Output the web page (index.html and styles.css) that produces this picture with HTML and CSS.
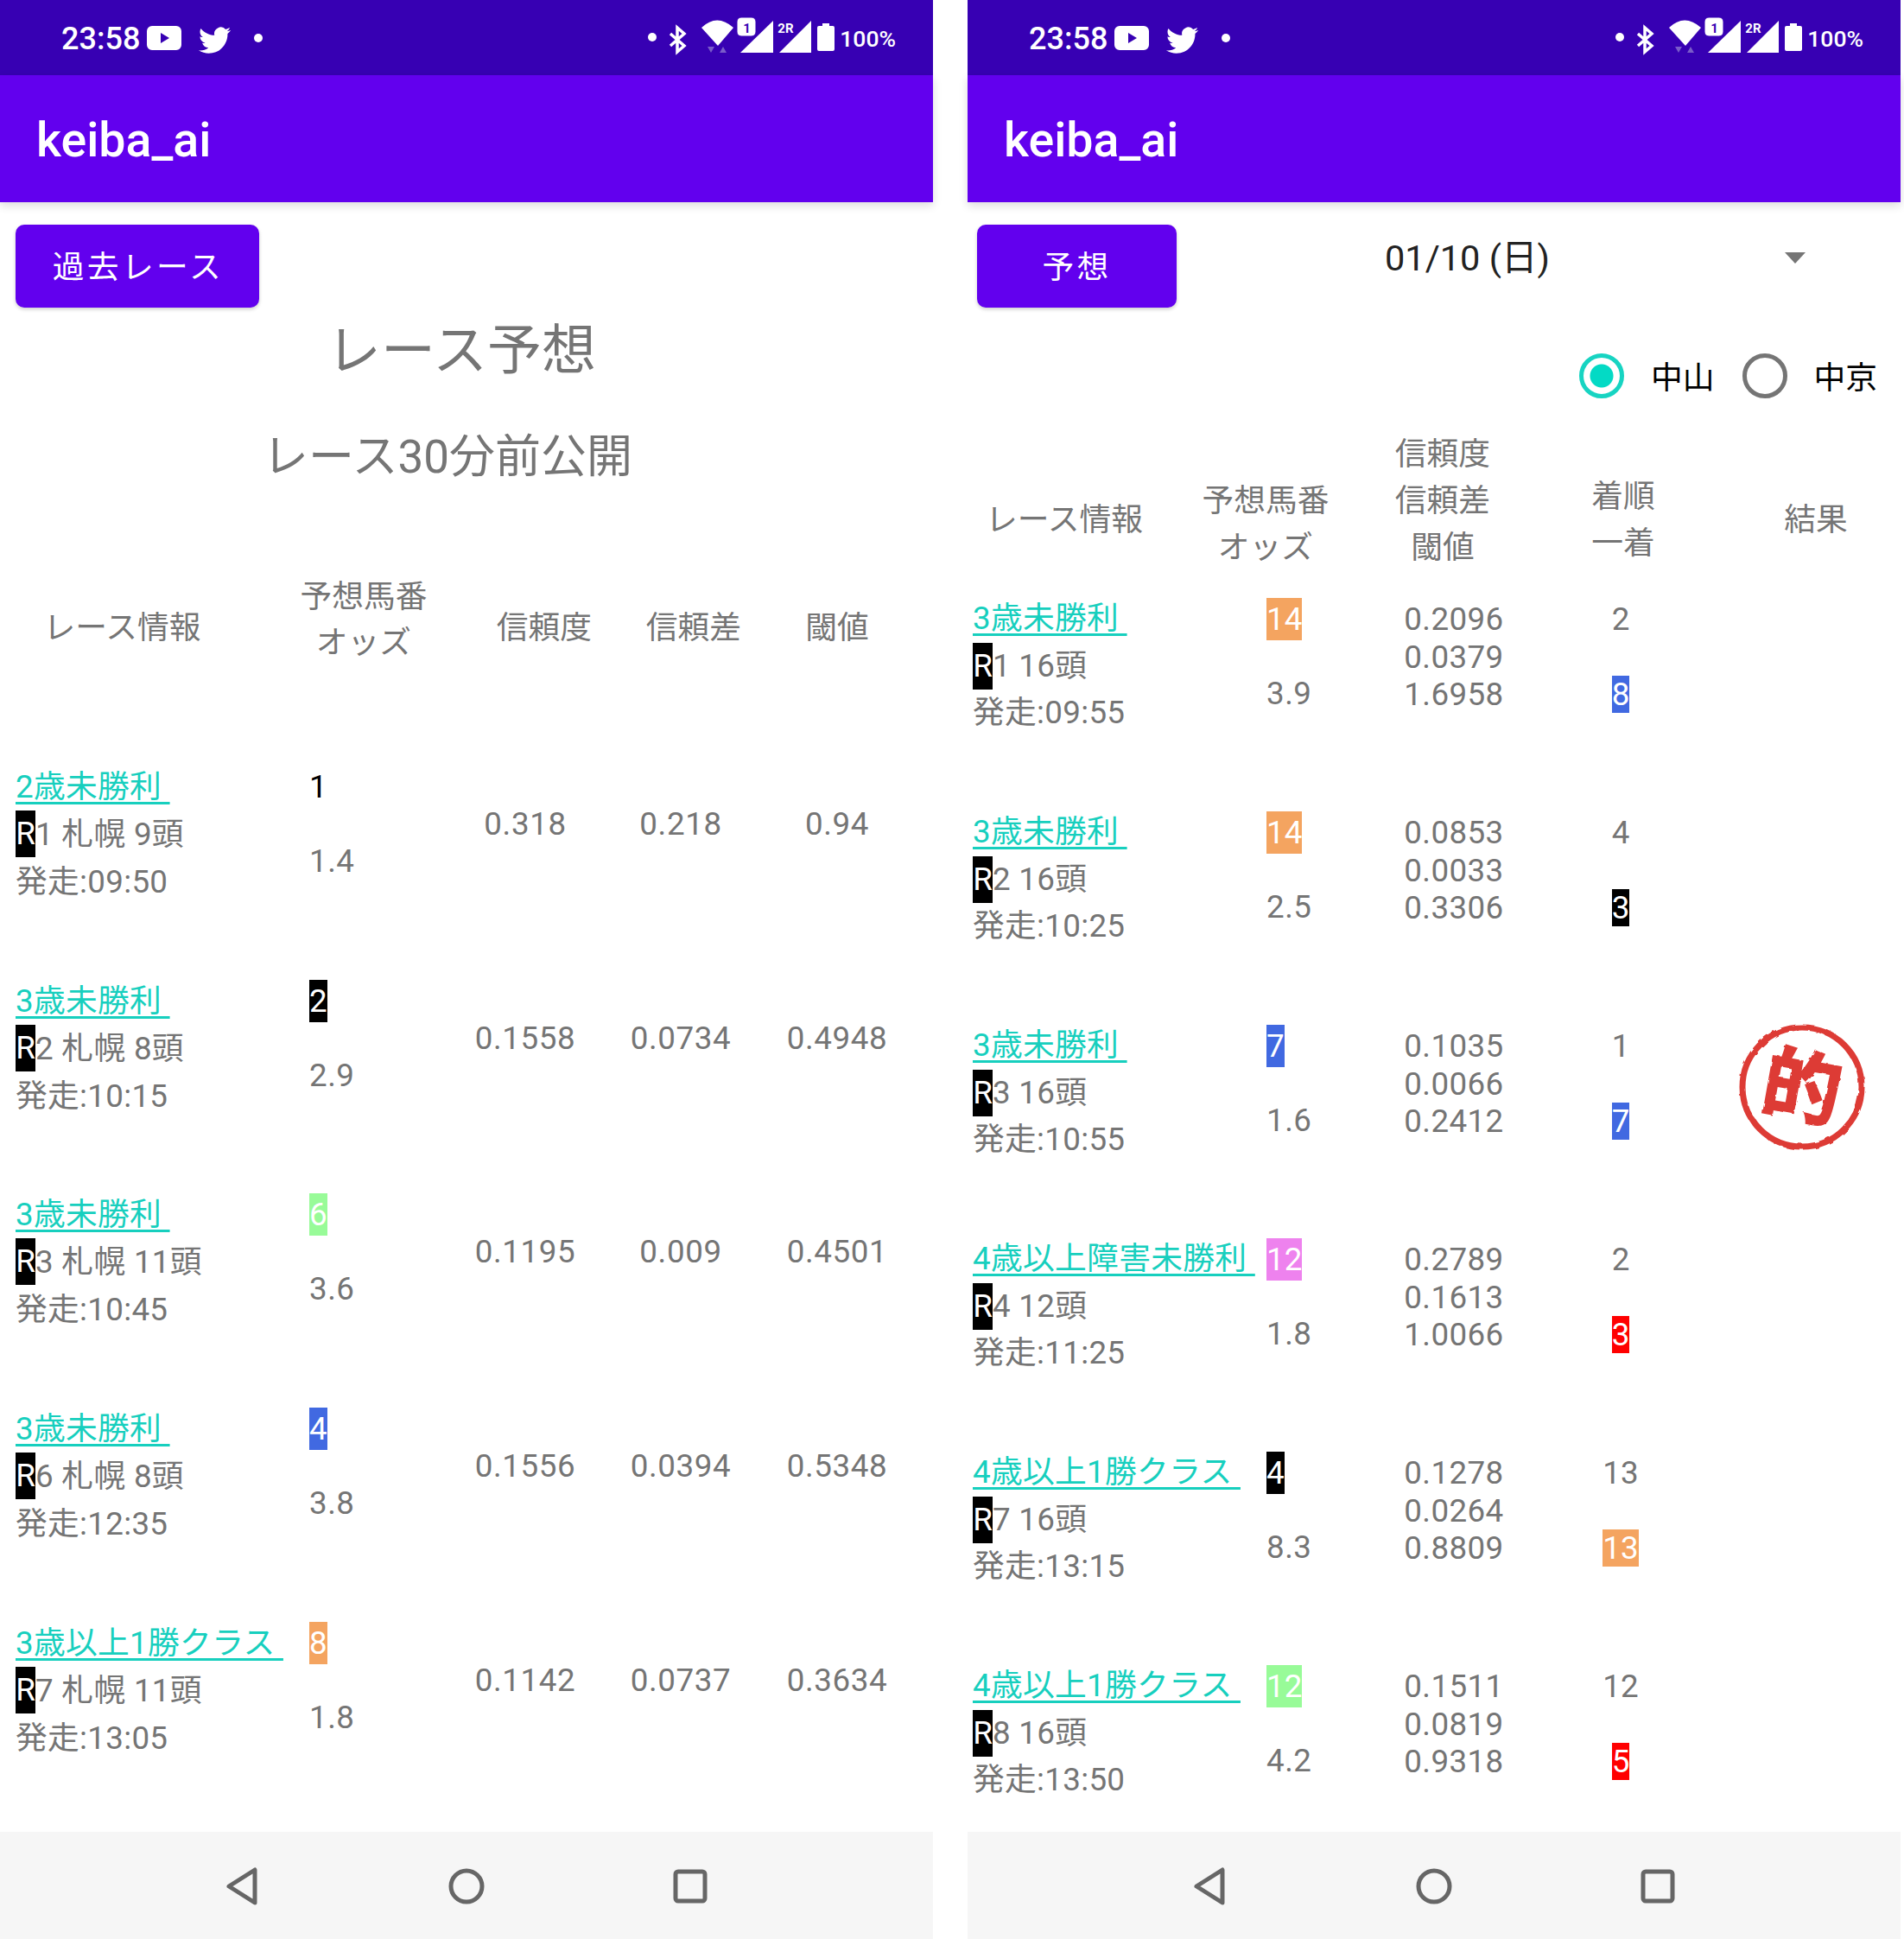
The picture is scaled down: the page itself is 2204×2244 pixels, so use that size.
FILE: index.html
```html
<!DOCTYPE html>
<html lang="ja">
<head>
<meta charset="utf-8">
<title>keiba_ai</title>
<link rel="stylesheet" href="styles.css">
</head>
<body>
<svg class="defs" width="0" height="0">
  <defs>
    <filter id="rough" x="-5%" y="-5%" width="110%" height="110%">
      <feTurbulence type="fractalNoise" baseFrequency="0.09" numOctaves="2" seed="4"/>
      <feDisplacementMap in="SourceGraphic" scale="3.5"/>
    </filter>
  </defs>
  <symbol id="status-left" viewBox="170 20 135 50">
    <path fill="#fff" fill-rule="evenodd" d="M176 30h28a6 6 0 0 1 6 6v16a6 6 0 0 1-6 6h-28a6 6 0 0 1-6-6V36a6 6 0 0 1 6-6zM186 38v12l10-6z"/>
    <g transform="translate(230 28) scale(1.55)"><path fill="#fff" d="M23.953 4.57a10 10 0 01-2.825.775 4.958 4.958 0 002.163-2.723c-.951.555-2.005.959-3.127 1.184a4.92 4.92 0 00-8.384 4.482C7.69 8.095 4.067 6.13 1.64 3.162a4.822 4.822 0 00-.666 2.475c0 1.71.87 3.213 2.188 4.096a4.904 4.904 0 01-2.228-.616v.06a4.923 4.923 0 003.946 4.827 4.996 4.996 0 01-2.212.085 4.936 4.936 0 004.604 3.417 9.867 9.867 0 01-6.102 2.105c-.39 0-.779-.023-1.17-.067a13.995 13.995 0 007.557 2.209c9.053 0 13.998-7.496 13.998-13.985 0-.21 0-.42-.015-.63A9.935 9.935 0 0024 4.59z"/></g>
    <circle cx="299" cy="44" r="5" fill="#fff"/>
  </symbol>
  <symbol id="status-glyphs" viewBox="750 15 222 50">
    <circle cx="757" cy="43" r="5" fill="#fff"/>
    <path fill="none" stroke="#fff" stroke-width="3.5" d="M778 39l16 14-8 7V32l8 7-16 14"/>
    <path fill="#fff" d="M814 32q18-17 37 0l-18 21z"/>
    <path fill="#7a5cc9" d="M821 54h8l-4 7zM839 54l4 7h-8z"/>
    <path fill="#fff" d="M859 61l38-37v37z"/>
    <rect x="855" y="20" width="22" height="22" rx="5" fill="#fff" stroke="#3700b3" stroke-width="1"/>
    <path fill="#fff" d="M904 61l37-37v37z"/>
    <path fill="#fff" d="M954 27h8v3h4a2 2 0 0 1 2 2v25a2 2 0 0 1-2 2h-16a2 2 0 0 1-2-2V32a2 2 0 0 1 2-2h4z"/>
  </symbol>
  <symbol id="nav-back" viewBox="0 0 40 46"><path fill="none" stroke="#666" stroke-width="5" stroke-linejoin="round" d="M35 4v38L5 23z"/></symbol>
  <symbol id="nav-home" viewBox="0 0 46 46"><circle cx="23" cy="23" r="18" fill="none" stroke="#666" stroke-width="5"/></symbol>
  <symbol id="nav-recent" viewBox="0 0 44 44"><rect x="5" y="5" width="34" height="34" rx="3" fill="none" stroke="#666" stroke-width="5"/></symbol>
</svg>

<div class="screens">

<section class="phone">
  <div class="status">
    <span class="time">23:58</span>
    <svg class="icons-left"><use href="#status-left"/></svg>
    <div class="icons-right">
      <svg class="icons-art"><use href="#status-glyphs"/></svg>
      <span class="sim sim-1">1</span>
      <span class="sim sim-2">2R</span>
    </div>
    <span class="battery">100%</span>
  </div>
  <header class="appbar">keiba_ai</header>
  <main class="content">
    <div class="toolbar toolbar-left"><button class="btn btn-past">過去レース</button></div>
    <h1 class="title">レース予想</h1>
    <h2 class="subtitle">レース30分前公開</h2>

    <div class="thead-l">
      <div class="low info">レース情報</div>
      <div>予想馬番<br>オッズ</div>
      <div class="low">信頼度</div>
      <div class="low">信頼差</div>
      <div class="low">閾値</div>
    </div>

    <div class="row-l">
      <div class="race"><a href="#">2歳未勝利&nbsp;</a><br><span class="r">R</span>1 札幌 9頭<br>発走:09:50</div>
      <div class="pick"><span class="num black-text">1</span><span class="odds">1.4</span></div>
      <div class="val">0.318</div><div class="val">0.218</div><div class="val">0.94</div>
    </div>
    <div class="row-l">
      <div class="race"><a href="#">3歳未勝利&nbsp;</a><br><span class="r">R</span>2 札幌 8頭<br>発走:10:15</div>
      <div class="pick"><span class="num b-black">2</span><span class="odds">2.9</span></div>
      <div class="val">0.1558</div><div class="val">0.0734</div><div class="val">0.4948</div>
    </div>
    <div class="row-l">
      <div class="race"><a href="#">3歳未勝利&nbsp;</a><br><span class="r">R</span>3 札幌 11頭<br>発走:10:45</div>
      <div class="pick"><span class="num b-green">6</span><span class="odds">3.6</span></div>
      <div class="val">0.1195</div><div class="val">0.009</div><div class="val">0.4501</div>
    </div>
    <div class="row-l">
      <div class="race"><a href="#">3歳未勝利&nbsp;</a><br><span class="r">R</span>6 札幌 8頭<br>発走:12:35</div>
      <div class="pick"><span class="num b-blue">4</span><span class="odds">3.8</span></div>
      <div class="val">0.1556</div><div class="val">0.0394</div><div class="val">0.5348</div>
    </div>
    <div class="row-l">
      <div class="race"><a href="#">3歳以上1勝クラス&nbsp;</a><br><span class="r">R</span>7 札幌 11頭<br>発走:13:05</div>
      <div class="pick"><span class="num b-orange">8</span><span class="odds">1.8</span></div>
      <div class="val">0.1142</div><div class="val">0.0737</div><div class="val">0.3634</div>
    </div>
  </main>
  <nav class="navbar">
    <svg class="nav-b"><use href="#nav-back"/></svg>
    <svg class="nav-h"><use href="#nav-home"/></svg>
    <svg class="nav-r"><use href="#nav-recent"/></svg>
  </nav>
</section>

<section class="phone">
  <div class="status">
    <span class="time">23:58</span>
    <svg class="icons-left"><use href="#status-left"/></svg>
    <div class="icons-right">
      <svg class="icons-art"><use href="#status-glyphs"/></svg>
      <span class="sim sim-1">1</span>
      <span class="sim sim-2">2R</span>
    </div>
    <span class="battery">100%</span>
  </div>
  <header class="appbar">keiba_ai</header>
  <main class="content">
    <div class="toolbar toolbar-right">
      <button class="btn btn-pred">予想</button>
      <div class="spinner"><span>01/10 (日)</span><i class="caret"></i></div>
    </div>
    <div class="radios">
      <i class="radio on"></i><span class="radio-label">中山</span>
      <i class="radio"></i><span class="radio-label">中京</span>
    </div>

    <div class="thead-r">
      <div class="low info">レース情報</div>
      <div class="low pick-head">予想馬番<br>オッズ</div>
      <div>信頼度<br>信頼差<br>閾値</div>
      <div class="low">着順<br>一着</div>
      <div class="low last">結果</div>
    </div>

    <div class="row-r">
      <div class="race"><a href="#">3歳未勝利&nbsp;</a><br><span class="r">R</span>1 16頭<br>発走:09:55</div>
      <div class="pick"><span class="num b-orange">14</span><span class="odds">3.9</span></div>
      <div class="stats">0.2096<br>0.0379<br>1.6958</div>
      <div class="rank"><span>2</span><span class="small b-blue">8</span></div>
      <div class="result"></div>
    </div>
    <div class="row-r">
      <div class="race"><a href="#">3歳未勝利&nbsp;</a><br><span class="r">R</span>2 16頭<br>発走:10:25</div>
      <div class="pick"><span class="num b-orange">14</span><span class="odds">2.5</span></div>
      <div class="stats">0.0853<br>0.0033<br>0.3306</div>
      <div class="rank"><span>4</span><span class="small b-black">3</span></div>
      <div class="result"></div>
    </div>
    <div class="row-r">
      <div class="race"><a href="#">3歳未勝利&nbsp;</a><br><span class="r">R</span>3 16頭<br>発走:10:55</div>
      <div class="pick"><span class="num b-blue">7</span><span class="odds">1.6</span></div>
      <div class="stats">0.1035<br>0.0066<br>0.2412</div>
      <div class="rank"><span>1</span><span class="small b-blue">7</span></div>
      <div class="result">
        <svg class="stamp" viewBox="0 0 150 150">
          <g filter="url(#rough)">
            <circle cx="75" cy="75" r="69" fill="none" stroke="#dd3a36" stroke-width="7"/>
            <text x="75" y="108" class="stamp-text" transform="rotate(10 75 75)">的</text>
          </g>
        </svg>
      </div>
    </div>
    <div class="row-r">
      <div class="race"><a href="#">4歳以上障害未勝利&nbsp;</a><br><span class="r">R</span>4 12頭<br>発走:11:25</div>
      <div class="pick"><span class="num b-violet">12</span><span class="odds">1.8</span></div>
      <div class="stats">0.2789<br>0.1613<br>1.0066</div>
      <div class="rank"><span>2</span><span class="small b-red">3</span></div>
      <div class="result"></div>
    </div>
    <div class="row-r">
      <div class="race"><a href="#">4歳以上1勝クラス&nbsp;</a><br><span class="r">R</span>7 16頭<br>発走:13:15</div>
      <div class="pick"><span class="num b-black">4</span><span class="odds">8.3</span></div>
      <div class="stats">0.1278<br>0.0264<br>0.8809</div>
      <div class="rank"><span>13</span><span class="small b-orange">13</span></div>
      <div class="result"></div>
    </div>
    <div class="row-r">
      <div class="race"><a href="#">4歳以上1勝クラス&nbsp;</a><br><span class="r">R</span>8 16頭<br>発走:13:50</div>
      <div class="pick"><span class="num b-green">12</span><span class="odds">4.2</span></div>
      <div class="stats">0.1511<br>0.0819<br>0.9318</div>
      <div class="rank"><span>12</span><span class="small b-red">5</span></div>
      <div class="result"></div>
    </div>
  </main>
  <nav class="navbar">
    <svg class="nav-b"><use href="#nav-back"/></svg>
    <svg class="nav-h"><use href="#nav-home"/></svg>
    <svg class="nav-r"><use href="#nav-recent"/></svg>
  </nav>
</section>

</div>
</body>
</html>
```

FILE: styles.css
```css
* { box-sizing: border-box; }
html, body { margin: 0; padding: 0; background: #fff; }
body {
  width: 2204px;
  height: 2244px;
  overflow: hidden;
  font-family: Roboto, "Noto Sans CJK JP", sans-serif;
  font-size: 36.75px;
  color: #757575;
}
.defs { position: absolute; }
.screens { display: flex; gap: 40px; }
.phone { width: 1080px; height: 2244px; display: flex; flex-direction: column; }

/* status bar */
.status {
  height: 87px;
  background: #3700b3;
  color: #fff;
  display: flex;
  align-items: center;
  padding: 2px 43px 0 71px;
}
.time { font-size: 36px; font-weight: 500; width: 99px; }
.icons-left { width: 135px; height: 50px; align-self: flex-start; margin-top: 18px; }
.icons-right { width: 222px; height: 50px; margin-left: auto; align-self: flex-start; margin-top: 13px; position: relative; }
.icons-art { width: 222px; height: 50px; display: block; }
.sim { position: absolute; font-size: 15px; font-weight: 700; line-height: 18px; }
.sim-1 { left: 112px; top: 9px; color: #3700b3; }
.sim-2 { left: 152px; top: 9px; }
.battery { font-size: 26.5px; font-weight: 500; margin-left: 2px; }

/* app bar */
.appbar {
  height: 147px;
  background: #6200ee;
  color: #fff;
  font-size: 55.5px;
  font-weight: 500;
  line-height: 147px;
  padding: 2px 0 0 42px;
  box-shadow: 0 4px 10px rgba(0, 0, 0, .14);
  position: relative;
}

.content { flex: 1; min-height: 0; overflow: hidden; }

/* buttons */
.toolbar { display: flex; margin-top: 26px; align-items: flex-start; }
.btn {
  height: 96px;
  border: 0;
  border-radius: 10px;
  background: #6200ee;
  color: #fff;
  font: inherit;
  letter-spacing: 3.28px;
  box-shadow: 0 2px 4px rgba(0, 0, 0, .2);
  padding: 0 0 5px;
}
.btn-past { width: 282px; margin-left: 18px; padding-left: 2px; }
.btn-pred { width: 231px; margin-left: 11px; }

/* titles */
.title { margin: 10px 0 0; height: 80px; line-height: 80px; font-size: 63px; font-weight: 400; text-align: center; padding-right: 12px; }
.subtitle { margin: 48px 0 0; height: 70px; line-height: 70px; font-size: 53px; font-weight: 400; text-align: center; padding-right: 44px; }

/* left table */
.thead-l {
  display: grid;
  grid-template-columns: 250px 306px 112px 234px 98px;
  margin: 99.5px 0 0 18px;
  line-height: 53px;
  text-align: center;
  align-items: center;
}
.thead-l > div { white-space: nowrap; }
.thead-l .low { padding-top: 20px; }
.thead-l .info { padding-right: 3px; }
.row-l {
  display: grid;
  grid-template-columns: 340px 160px 180px 180px 182px;
  height: 247.7px;
  margin-left: 18px;
}
.thead-l + .row-l { margin-top: 113.5px; }
.race { line-height: 55px; white-space: nowrap; letter-spacing: .3px; }
.row-r .race { line-height: 54.6px; }
.race a { color: #17cfbe; text-decoration: underline; text-underline-offset: 5px; }
.r { display: inline-block; background: #000; color: #fff; height: 54px; line-height: 54px; width: 23px; vertical-align: top; text-align: center; overflow: hidden; letter-spacing: 0; }
.pick { display: flex; flex-direction: column; align-items: flex-start; }
.num { display: block; height: 49px; line-height: 49px; margin-top: 3px; }
.odds { display: block; line-height: 55px; margin-top: 34px; letter-spacing: .5px; }
.black-text { color: #000; }
.val { text-align: center; line-height: 55px; padding-top: 43px; letter-spacing: .6px; }

.b-black { background: #000; color: #fff; }
.b-green { background: #98fb98; color: #fff; }
.b-blue { background: #4169e1; color: #fff; }
.b-orange { background: #f4a460; color: #fff; }
.b-violet { background: #ee82ee; color: #fff; }
.b-red { background: #f00; color: #fff; }

/* right screen */
.spinner {
  margin-left: 241px;
  width: 487px;
  display: flex;
  justify-content: space-between;
  align-items: center;
  height: 44px;
  margin-top: 16px;
  color: #222;
  font-size: 41.5px;
}
.spinner span { position: relative; top: -3px; }
.caret { width: 0; height: 0; border-style: solid; border-width: 13px 12px 0; border-color: #757575 transparent transparent; }
.radios {
  display: flex;
  justify-content: flex-end;
  align-items: center;
  height: 60px;
  margin-top: 49px;
  padding-right: 27px;
  color: #000;
}
.radio { width: 52px; height: 52px; border-radius: 50%; border: 5px solid #757575; display: block; }
.radio.on { border-color: #17d4c2; background: radial-gradient(circle, #03dac5 0 13px, transparent 14px); }
.radio-label { margin: 0 33px 0 31px; position: relative; top: -1px; }
.radio-label:last-child { margin: 0 0 0 30px; }

.thead-r {
  display: grid;
  grid-template-columns: 230px 230px 180px 238px 202px;
  margin-top: 34px;
  line-height: 54px;
  text-align: center;
  align-items: center;
}
.thead-r .low { padding-top: 44px; }
.thead-r .info { padding-right: 6px; }
.thead-r .pick-head { padding-top: 54px; }
.thead-r .last { padding-left: 6px; }
.row-r {
  display: grid;
  grid-template-columns: 340px 114px 206px 180px 234px;
  height: 247px;
  margin-left: 6px;
}
.thead-r + .row-r { margin-top: 28px; }
.stats { line-height: 43.5px; padding-top: 6px; text-align: center; letter-spacing: .4px; }
.rank { display: flex; flex-direction: column; align-items: center; padding-top: 3px; }
.rank > span:first-child { height: 49px; line-height: 49px; }
.rank .small { height: 43px; line-height: 43px; margin-top: 41px; }
.result { display: flex; justify-content: center; align-items: flex-start; padding-left: 5px; }
.stamp { width: 150px; height: 150px; overflow: visible; }
.stamp-text { font: 900 92px "Noto Sans CJK JP", sans-serif; fill: #dd3a36; text-anchor: middle; }

/* nav bar */
.navbar { height: 124px; background: #f6f6f6; display: flex; align-items: center; padding-top: 2px; }
.nav-b { width: 40px; height: 46px; margin-left: 260px; }
.nav-h { width: 46px; height: 46px; margin-left: 217px; }
.nav-r { width: 44px; height: 44px; margin-left: 214px; }
```
